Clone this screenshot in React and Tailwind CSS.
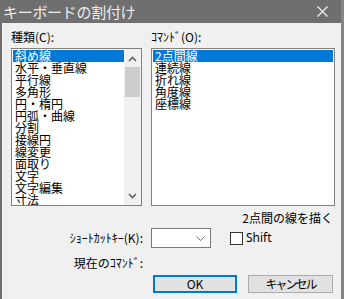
// キーボードの割付け dialog
const SHURUI = [
  '斜め線',
  '水平・垂直線',
  '平行線',
  '多角形',
  '円・楕円',
  '円弧・曲線',
  '分割',
  '接線円',
  '線変更',
  '面取り',
  '文字',
  '文字編集',
  '寸法',
]

const COMMANDS = ['2点間線', '連続線', '折れ線', '角度線', '座標線']

function Chevron({ up }) {
  return (
    <svg width="9" height="6" viewBox="0 0 9 6">
      <polyline
        points={up ? '1,5 4.5,1.5 8,5' : '1,1 4.5,4.5 8,1'}
        fill="none"
        stroke="#606060"
        strokeWidth="1.6"
      />
    </svg>
  )
}

function ListItem({ text, selected }) {
  return (
    <div
      className={`h-[12px] leading-[12px] pl-[2px] whitespace-nowrap ${
        selected ? 'bg-[#0078d7] text-white' : 'text-black'
      }`}
    >
      {text}
    </div>
  )
}

export default function App() {
  return (
    <div className="w-[344px] h-[299px] overflow-hidden bg-[#f0f0f0] border-r-[3px] border-[#858585] font-['Noto_Sans_CJK_JP',sans-serif] text-[12px] text-black flex flex-col">
      {/* タイトルバー */}
      <div className="h-[23px] shrink-0 bg-[#6f6f6f] flex items-center justify-between pl-[3px] pr-[13px]">
        <span className="text-[15px] leading-none text-[#ececec] tracking-[-0.3px]">
          キーボードの割付け
        </span>
        <svg width="11" height="11" viewBox="0 0 11 11">
          <path d="M0.5 0.5 L10.5 10.5 M10.5 0.5 L0.5 10.5" stroke="#f2f2f2" strokeWidth="1.2" />
        </svg>
      </div>

      <div className="flex-1 border-l-2 border-[#6f6f6f] pl-[9px] pr-[6px] pt-[7px]">
        <div className="flex gap-[9px]">
          {/* 種類 */}
          <div className="flex flex-col">
            <div className="h-[14px] leading-[14px]">種類(C):</div>
            <div className="mt-[4px] w-[131px] h-[158px] border border-[#828282] bg-white flex">
              <div className="flex-1 pl-[1px] pt-[1px] overflow-hidden">
                {SHURUI.map((t, i) => (
                  <ListItem key={t} text={t} selected={i === 0} />
                ))}
              </div>
              <div className="w-[17px] bg-[#f0f0f0] flex flex-col">
                <div className="h-[17px] flex items-center justify-center pt-[2px]">
                  <Chevron up />
                </div>
                <div className="flex-1 px-[1px] pt-[1px]">
                  <div className="h-[30px] bg-[#cdcdcd]" />
                </div>
                <div className="h-[17px] flex items-center justify-center pb-[1px]">
                  <Chevron />
                </div>
              </div>
            </div>
          </div>

          {/* コマンド */}
          <div className="flex flex-col">
            <div className="h-[14px] leading-[14px]">ｺﾏﾝﾄﾞ(O):</div>
            <div className="mt-[4px] w-[184px] h-[158px] border border-[#828282] bg-white pl-[1px] pr-[1px] pt-[1px]">
              {COMMANDS.map((t, i) => (
                <ListItem key={t} text={t} selected={i === 0} />
              ))}
            </div>
          </div>
        </div>

        <div className="mt-[6px] h-[12px] leading-[12px] text-right pr-[2px]">2点間の線を描く</div>

        <div className="mt-[4px] flex items-center h-[20px]">
          <div className="w-[132px] text-right whitespace-nowrap">ｼｮｰﾄｶｯﾄｷｰ(K):</div>
          <div className="ml-[8px] w-[60px] h-[20px] border border-[#7a7a7a] bg-white flex items-center justify-end pr-[5px]">
            <svg width="9" height="5" viewBox="0 0 9 5">
              <polyline points="0.5,0.5 4.5,4.5 8.5,0.5" fill="none" stroke="#6a6a6a" strokeWidth="1" />
            </svg>
          </div>
          <div className="ml-[19px] w-[13px] h-[13px] border border-[#333333] bg-white" />
          <span className="ml-[3px] font-['Noto_Sans',sans-serif] text-[12px] leading-none">Shift</span>
        </div>

        <div className="mt-[9px] h-[12px] leading-[12px] w-[132px] text-right whitespace-nowrap">
          現在のｺﾏﾝﾄﾞ:
        </div>

        <div className="mt-[6px] ml-[142px] flex gap-[11px]">
          <button className="w-[84px] h-[18px] border-2 border-[#0078d7] bg-[#e1e1e1] leading-none flex items-center justify-center">
            OK
          </button>
          <button className="w-[85px] h-[18px] border border-[#adadad] bg-[#e1e1e1] leading-none flex items-center justify-center tracking-[-2px]">
            キャンセル
          </button>
        </div>
      </div>
    </div>
  )
}
